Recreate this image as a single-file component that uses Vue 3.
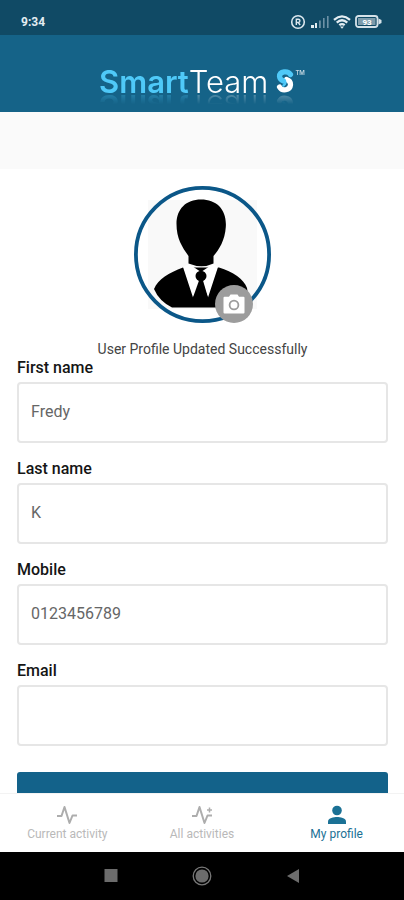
<script setup>
import { ref } from 'vue'

const message = ref('User Profile Updated Successfully')
const fields = ref([
  { id: 'first-name', label: 'First name', type: 'text', value: 'Fredy' },
  { id: 'last-name', label: 'Last name', type: 'text', value: 'K' },
  { id: 'mobile', label: 'Mobile', type: 'tel', value: '0123456789' },
  { id: 'email', label: 'Email', type: 'email', value: '' },
])
</script>

<template>
  <div class="screen">
    <div class="status">
      <span class="time">9:34</span>
      <div class="status-icons">
        <svg width="16" height="16" viewBox="0 0 16 16" fill="none" stroke="#dbe7ee">
          <circle cx="8" cy="8" r="6.3" stroke-width="1.6" />
          <path d="M6.3 11V5.2h2a1.6 1.6 0 0 1 0 3.3h-2M8.3 8.5l1.8 2.5" stroke-width="1.4" />
        </svg>
        <svg width="19" height="13" viewBox="0 0 19 13">
          <path d="M1 10h3v3H1zM5 8h2v5H5z" fill="#e3edf2" />
          <path d="M9 5.500h1.800V13H9zM13 3h1.600v10H13zM17 1h1.600v12H17z" fill="#6c91a6" />
        </svg>
        <svg width="18" height="14" viewBox="0 0 18 14" fill="none" stroke="#e3edf2">
          <path d="M1 4.800Q9 -2 17 4.800M3.700 7.600Q9 3 14.300 7.600M6.300 10.200Q9 8 11.700 10.200" stroke-width="2.300" />
          <path d="M7 11.500h4l-2 2.300z" fill="#e3edf2" stroke="none" />
        </svg>
        <svg width="27" height="13" viewBox="0 0 27 13">
          <rect x="1" y="1" width="21.500" height="11" rx="2.500" fill="none" stroke="#d5e2e9" stroke-width="1.800" />
          <rect x="3" y="3" width="17.500" height="7" fill="#7c9bab" />
          <path d="M23.500 3.500l3 1.500v3l-3 1.500z" fill="#d5e2e9" />
          <text x="12" y="9.500" text-anchor="middle" class="charge">93</text>
        </svg>
      </div>
    </div>

    <header class="header">
      <div class="logo">
        <span class="smart">Smart</span><span class="team">Team</span>
        <svg class="mark" width="18" height="26" viewBox="0 0 18 26" fill="none" stroke-linecap="round">
          <path d="M10.500 11.500Q14.800 13 14.500 17C14 22.500 6 23.500 3.500 19" stroke="#fff" stroke-width="5.200" />
          <path d="M14.500 6.500C12 2.500 3.500 3 3.500 8.500Q3.800 11.500 7.500 13" stroke="#4fc9f8" stroke-width="5.200" />
          <path d="M8 12.500Q11 15 7.500 17.500" stroke="#4fc9f8" stroke-width="2.500" />
        </svg>
        <span class="tm">TM</span>
      </div>
    </header>

    <main class="content">
      <div class="band"></div>
      <form class="profile" @submit.prevent>
        <div class="avatar">
          <svg class="portrait" viewBox="0 0 137 137">
            <circle cx="68.500" cy="68.500" r="67" fill="#fff" />
            <rect x="14" y="14" width="109" height="109" fill="#f9f9f9" />
            <path d="M20 103C24 93 35 87 49 81.500H85C99 86 110 93 113 102Q115 108 108 113Q101 121 92 121.500H38Q25 115 20 103Z" fill="#000" />
            <path d="M49 81L59 111.500L67 95L74 111.500L84 81L79 78L67 86L55 78Z" fill="#fff" />
            <path d="M65 94.500H69L74 111.500V121H59V111.500Z" fill="#000" />
            <ellipse cx="67" cy="90" rx="5.500" ry="5.200" fill="#000" />
            <path d="M67 13.500C83 13.500 93 24 91.800 41C91 54 85 64 79.500 70V77.500Q68 83 54.500 77.500V70C48 61 42.500 52 42.500 38C42.500 23 52 13.500 67 13.500Z" fill="#000" />
            <circle cx="68.500" cy="68.500" r="66.600" fill="none" stroke="#0b5788" stroke-width="3.800" />
          </svg>
          <button type="button" class="camera" aria-label="Change photo">
            <svg width="22" height="20" viewBox="0 0 22 20">
              <path d="M1.500 2.800H6L7.500 .5h7L16 2.800h4.500q1 0 1 1V18.500q0 1-1 1h-19q-1 0-1-1V3.800q0-1 1-1z" fill="#fff" />
              <circle cx="11" cy="11" r="4.400" fill="#fff" stroke="#9c9c9c" stroke-width="1.800" />
            </svg>
          </button>
        </div>
        <p class="message" role="status">{{ message }}</p>
        <div v-for="field in fields" :key="field.id" class="field">
          <label :for="field.id">{{ field.label }}</label>
          <input :id="field.id" v-model="field.value" :type="field.type" />
        </div>
        <button type="submit" class="save" aria-label="Save profile"></button>
      </form>
    </main>

    <nav class="tabs">
      <a href="#current" class="tab">
        <svg width="22" height="20" viewBox="0 0 22 20" fill="none" stroke="#adadad" stroke-width="2" stroke-linejoin="round">
          <path d="M1 11h4.500L8.500 2l5 16 3-7.500h4.500" />
        </svg>
        <span>Current activity</span>
      </a>
      <a href="#all" class="tab">
        <svg width="22" height="20" viewBox="0 0 22 20" fill="none" stroke="#adadad" stroke-width="2" stroke-linejoin="round">
          <path d="M1 11h4.500L8.500 2l5 16 3-7.500h4.500" />
          <path d="M18.500 2.500v5M16 5h5" stroke-width="1.500" />
        </svg>
        <span>All activities</span>
      </a>
      <a href="#profile" class="tab active" aria-current="page">
        <svg width="22" height="20" viewBox="0 0 22 20" fill="#1b7195">
          <circle cx="11" cy="5.500" r="4.800" />
          <path d="M2 19v-2.500C2 13 8 12 11 12s9 1 9 4.500V19z" />
        </svg>
        <span>My profile</span>
      </a>
    </nav>

    <div class="system">
      <button type="button" aria-label="Recent apps">
        <svg width="20" height="20" viewBox="0 0 20 20"><rect x="3.500" y="3" width="13" height="13" fill="#6c6c6c" /></svg>
      </button>
      <button type="button" aria-label="Home">
        <svg width="20" height="20" viewBox="0 0 20 20">
          <circle cx="10" cy="10" r="8.800" fill="none" stroke="#777" stroke-width="1.300" />
          <circle cx="10" cy="10" r="6.600" fill="#6c6c6c" />
        </svg>
      </button>
      <button type="button" aria-label="Back">
        <svg width="20" height="20" viewBox="0 0 20 20"><path d="M16 3v14L4 10z" fill="#6c6c6c" /></svg>
      </button>
    </div>
  </div>
</template>

<style>
body {
  background: #fff;
}
</style>

<style scoped>
.screen {
  display: flex;
  flex-direction: column;
  height: 100vh;
  font-family: Roboto, sans-serif;
  background: #fff;
}

svg {
  display: block;
}

button {
  padding: 0;
  border: 0;
}

.status {
  display: flex;
  align-items: center;
  justify-content: space-between;
  height: 27px;
  padding: 8px 22px 0 21px;
  background: #104a65;
}

.time {
  color: #e3edf2;
  font-size: 12px;
  font-weight: 700;
}

.status-icons {
  display: flex;
  align-items: center;
  gap: 4px;
}

.charge {
  fill: #fff;
  font-size: 8px;
  font-weight: 700;
}

.header {
  display: flex;
  justify-content: center;
  height: 48px;
  padding-top: 29px;
  background: #156388;
}

.logo {
  display: flex;
  height: 36px;
  font-family: Inter, sans-serif;
  font-size: 31px;
  line-height: 36px;
  -webkit-box-reflect: below -12px linear-gradient(transparent 55%, rgba(255, 255, 255, 0.35) 90%);
}

.smart {
  color: #4fc9f8;
  font-weight: 600;
}

.team {
  color: #fff;
  font-weight: 300;
}

.mark {
  margin: 4px 0 0 8px;
}

.tm {
  margin-left: 1px;
  color: #c5d8e2;
  font-size: 6px;
  font-weight: 600;
  line-height: 18px;
}

.content {
  flex: 1;
  min-height: 0;
  overflow-y: auto;
  scrollbar-width: none;
}

.band {
  height: 57px;
  background: #fafafa;
}

.profile {
  display: flex;
  flex-direction: column;
  padding: 17px 16px 24px 17px;
}

.avatar {
  position: relative;
  align-self: center;
  width: 137px;
}

.portrait {
  width: 100%;
}

.camera {
  position: absolute;
  right: 18px;
  bottom: 0;
  display: flex;
  align-items: center;
  justify-content: center;
  width: 38px;
  height: 38px;
  border-radius: 50%;
  background: #9c9c9c;
}

.message {
  margin: 17px 0 1px;
  color: #444;
  font-size: 14px;
  line-height: 18px;
  text-align: center;
}

.field {
  display: flex;
  flex-direction: column;
  gap: 5px;
  margin-bottom: 17px;
}

.field label {
  color: #151515;
  font-size: 16px;
  font-weight: 500;
  line-height: 18px;
}

.field input {
  box-sizing: border-box;
  width: 100%;
  height: 61px;
  padding: 0 12px 2px;
  border: 2px solid #e6e6e6;
  border-radius: 4px;
  outline: 0;
  background: #fff;
  color: #666;
  font-family: inherit;
  font-size: 16px;
}

.save {
  height: 52px;
  margin-top: 9px;
  border-radius: 3px;
  background: #13628a;
}

.tabs {
  display: grid;
  grid-template-columns: repeat(3, 1fr);
  height: 58px;
  border-top: 1px solid #f3f3f3;
  background: #fff;
}

.tab {
  display: flex;
  flex-direction: column;
  align-items: center;
  padding-top: 11px;
  color: #b9b9b9;
  font-size: 12px;
  line-height: 18px;
  text-decoration: none;
}

.tab.active {
  color: #1b7195;
}

.system {
  display: flex;
  align-items: center;
  justify-content: center;
  gap: 71px;
  height: 48px;
  background: #000;
}

.system button {
  background: none;
}
</style>
